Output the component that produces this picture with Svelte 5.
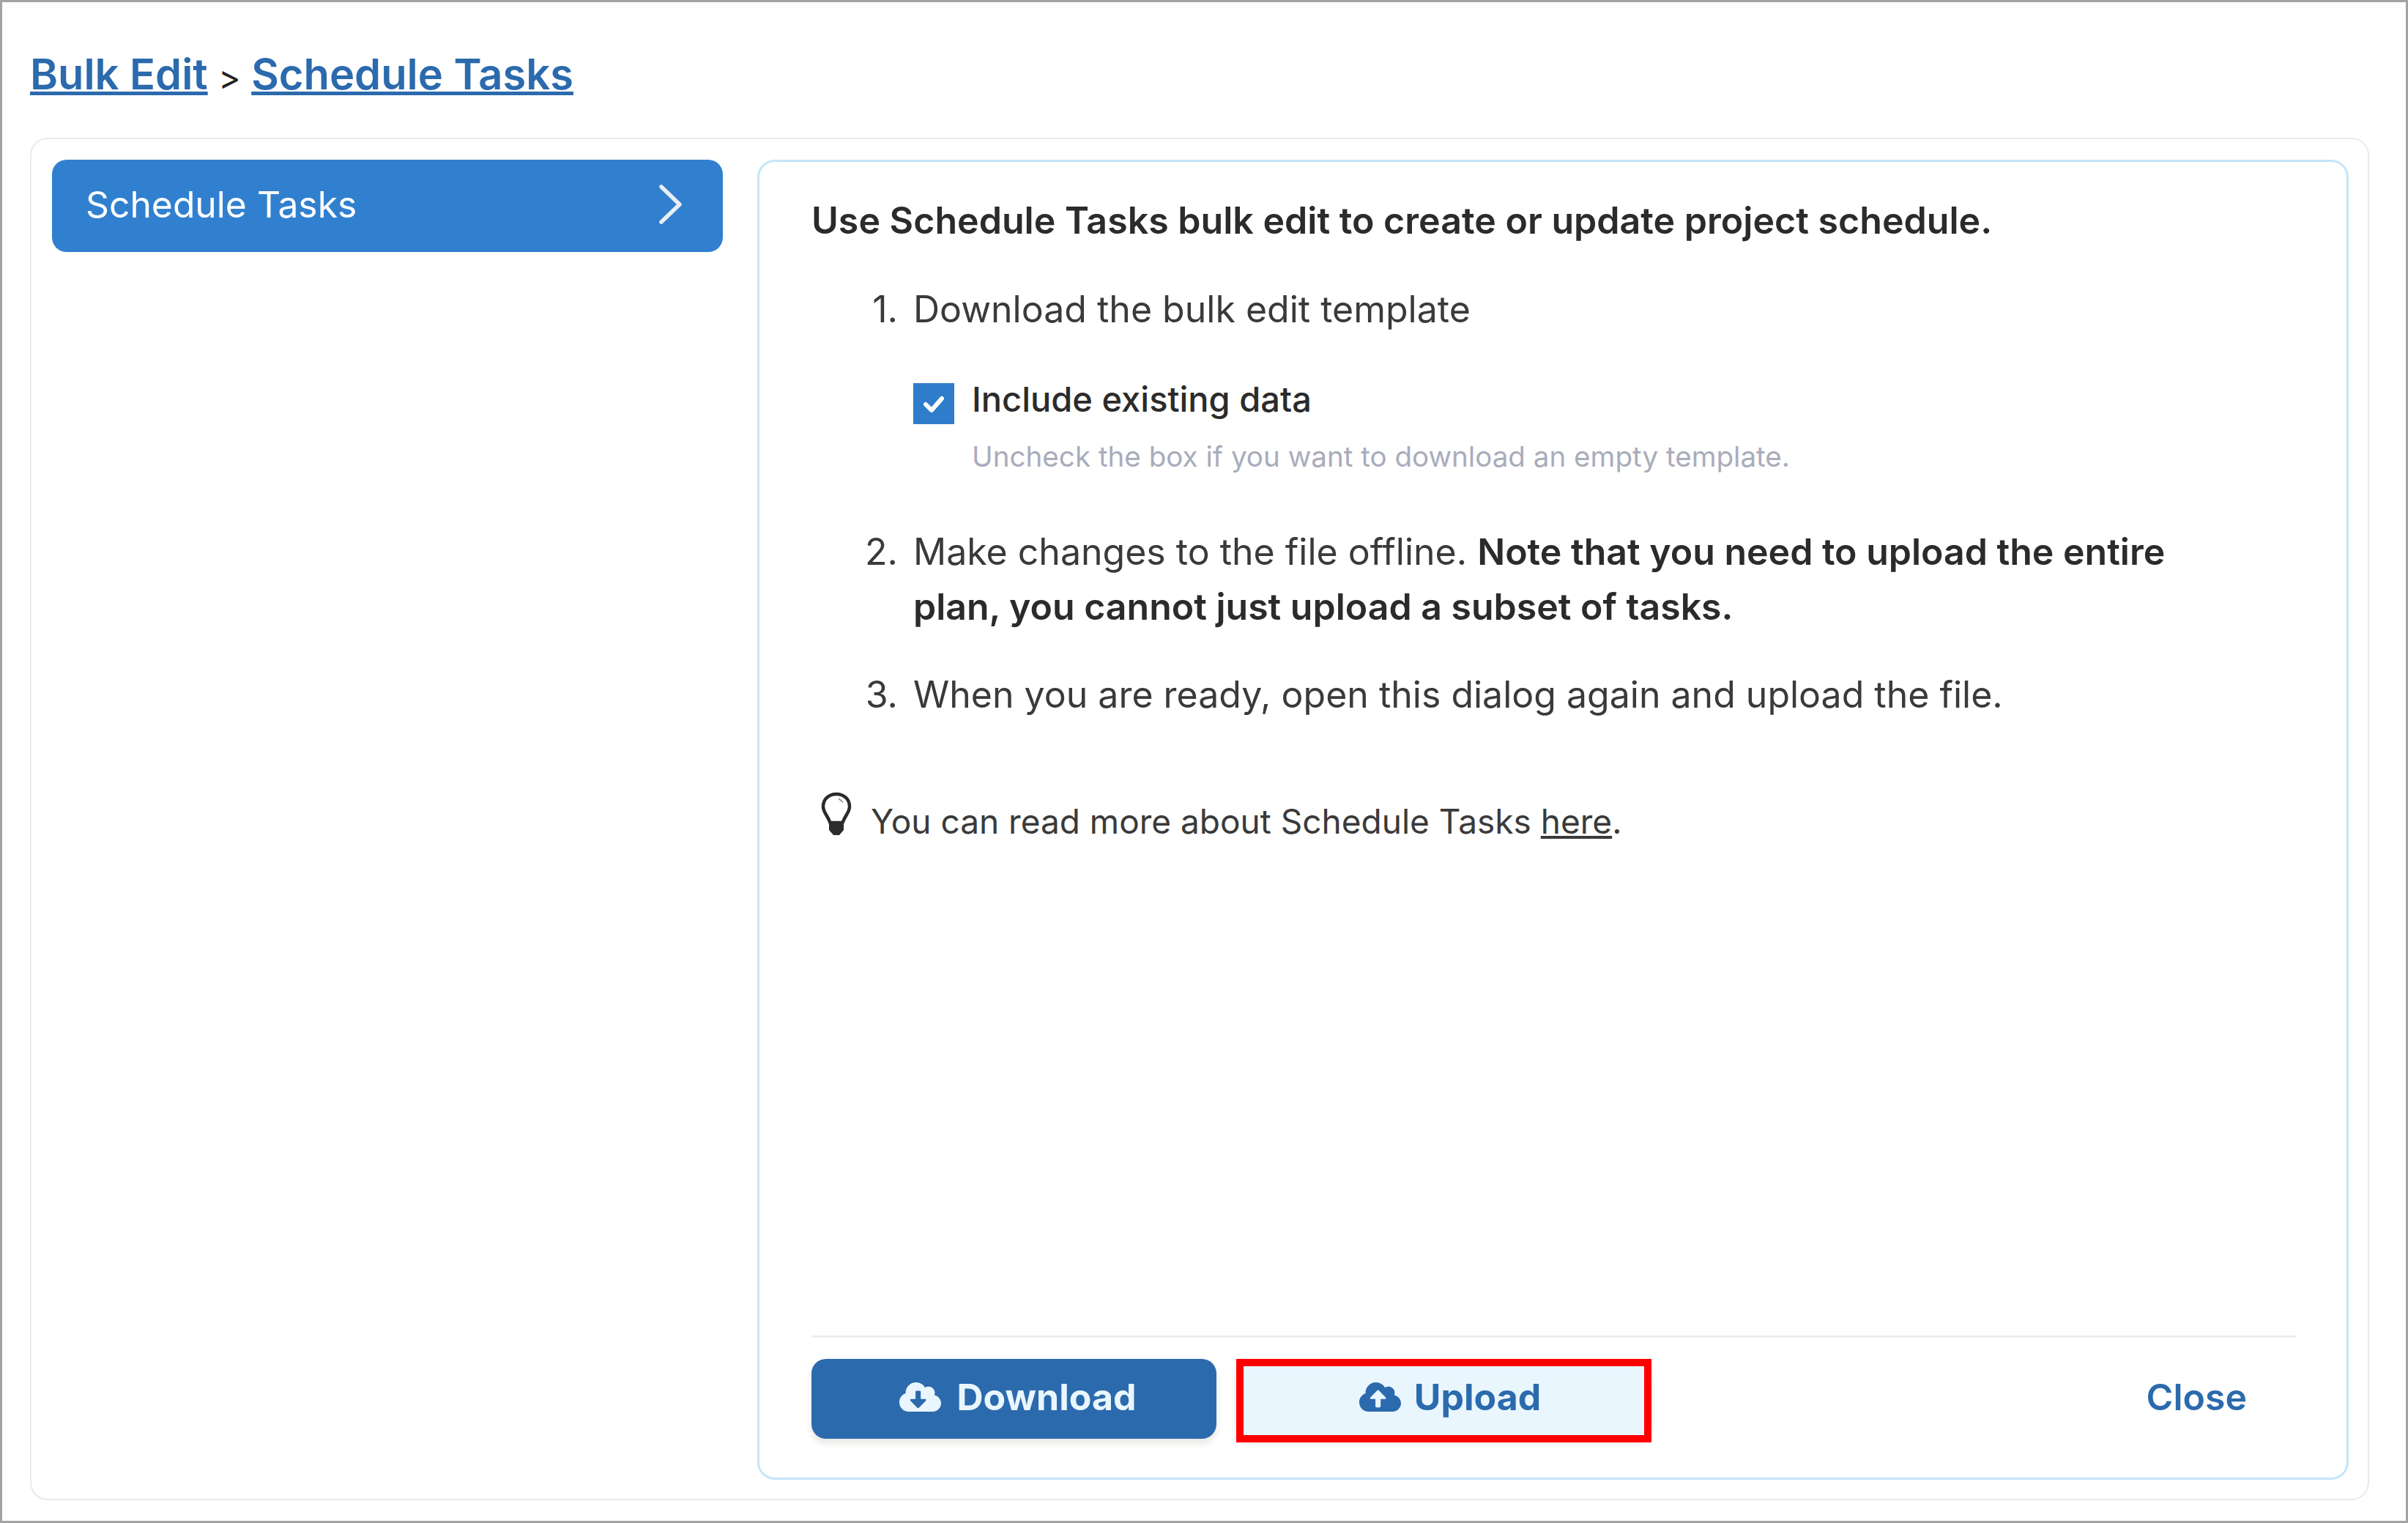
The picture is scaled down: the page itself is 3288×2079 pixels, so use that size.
<script>
  const cloudDown = "M537.6 226.6c4.1-10.7 6.4-22.4 6.4-34.6 0-53-43-96-96-96-19.7 0-38.1 6-53.3 16.2C367 64.2 315.3 32 256 32c-88.4 0-160 71.6-160 160 0 2.7.1 5.4.2 8.1C40.2 219.8 0 273.2 0 336c0 79.5 64.5 144 144 144h368c70.7 0 128-57.3 128-128 0-61.9-44-113.6-102.4-125.4zm-132.9 88.7L299.3 420.7c-6.2 6.2-16.4 6.2-22.6 0L171.3 315.3c-10.1-10.1-2.9-27.3 11.3-27.3H248V176c0-8.8 7.2-16 16-16h48c8.8 0 16 7.2 16 16v112h65.4c14.2 0 21.4 17.2 11.3 27.3z";
  const cloudUp = "M537.6 226.6c4.1-10.7 6.4-22.4 6.4-34.6 0-53-43-96-96-96-19.7 0-38.1 6-53.3 16.2C367 64.2 315.3 32 256 32c-88.4 0-160 71.6-160 160 0 2.7.1 5.4.2 8.1C40.2 219.8 0 273.2 0 336c0 79.5 64.5 144 144 144h368c70.7 0 128-57.3 128-128 0-61.9-44-113.6-102.4-125.4zM393.4 288H328v112c0 8.8-7.2 16-16 16h-48c-8.8 0-16-7.2-16-16V288h-65.4c-14.3 0-21.4-17.2-11.3-27.3l105.4-105.4c6.2-6.2 16.4-6.2 22.6 0l105.4 105.4c10.1 10.1 2.9 27.3-11.3 27.3z";
</script>

<div class="frame">
  <div class="crumbs">
    <a href="#bulk">Bulk Edit</a>
    <span class="sep">&gt;</span>
    <a href="#tasks">Schedule Tasks</a>
  </div>

  <div class="panel">
    <div class="side">
      <div class="side-item">
        <span>Schedule Tasks</span>
        <svg class="chev" viewBox="0 0 34 54" width="34" height="54">
          <path d="M4 3 L29 27 L4 51" fill="none" stroke="#e9eef5" stroke-width="5.5" stroke-linecap="round" stroke-linejoin="round" />
        </svg>
      </div>
    </div>

    <div class="main">
      <div class="body">
        <h2>Use Schedule Tasks bulk edit to create or update project schedule.</h2>

        <div class="step">
          <span class="num">1.</span>
          <div class="step-text">Download the bulk edit template</div>
        </div>

        <div class="check-row">
          <span class="box">
            <svg viewBox="0 0 56 56" width="56" height="56">
              <path d="M17 29 L25 37 L39 21" fill="none" stroke="#fff" stroke-width="6" stroke-linecap="round" stroke-linejoin="round" />
            </svg>
          </span>
          <div>
            <div class="check-label">Include existing data</div>
            <div class="hint">Uncheck the box if you want to download an empty template.</div>
          </div>
        </div>

        <div class="step two">
          <span class="num">2.</span>
          <div class="step-text">Make changes to the file offline. <b>Note that you need to upload the entire plan, you cannot just upload a subset of tasks.</b></div>
        </div>

        <div class="step three">
          <span class="num">3.</span>
          <div class="step-text">When you are ready, open this dialog again and upload the file.</div>
        </div>

        <div class="tip">
          <svg class="bulb" viewBox="0 0 42 60" width="42" height="60">
            <path d="M21 3 C10 3 3 10.500 3 20 C3 28 9 32 12.500 42 L29.500 42 C33 32 39 28 39 20 C39 10.500 32 3 21 3 Z" fill="none" stroke="#2b2b2b" stroke-width="4.500" />
            <path d="M24 9 L30 14" stroke="#9a9a9a" stroke-width="2" />
            <path d="M11 41 H31 V52 L25 59 H17 L11 52 Z" fill="#2b2b2b" />
          </svg>
          <span>You can read more about Schedule Tasks <a href="#here">here</a>.</span>
        </div>
      </div>

      <div class="footer">
        <button class="btn primary">
          <svg viewBox="0 0 640 512" width="57" height="46"><path d={cloudDown} fill="#eaf6fe" /></svg>
          Download
        </button>
        <div class="upload-wrap">
          <button class="btn secondary">
            <svg viewBox="0 0 640 512" width="57" height="46"><path d={cloudUp} fill="#2a6aad" /></svg>
            Upload
          </button>
          <div class="highlight"></div>
        </div>
        <button class="close">Close</button>
      </div>
    </div>
  </div>
</div>

<style>
  :global(body) { margin: 0; background: #fff; }
  .frame {
    box-sizing: border-box;
    width: 3288px;
    height: 2079px;
    border: 3px solid #a3a3a3;
    padding: 0 50px 28px 38px;
    display: flex;
    flex-direction: column;
    font-family: Inter, "Liberation Sans", sans-serif;
    color: #333;
    background: #fff;
  }
  .crumbs {
    height: 185px;
    box-sizing: border-box;
    padding-top: 62px;
    font-size: 57.800px;
    line-height: 72px;
    font-weight: 600;
    white-space: nowrap;
  }
  .crumbs a { color: #2a6aad; }
  .sep { color: #222; font-size: 46px; font-weight: 400; }
  .panel {
    flex: 1;
    display: flex;
    min-height: 0;
    box-sizing: border-box;
    border: 2px solid #e8eaee;
    border-radius: 24px;
    padding: 28px 26px 26px 28px;
    gap: 47px;
  }
  .side { width: 916px; flex: none; }
  .side-item {
    height: 126px;
    box-sizing: border-box;
    background: #3180cf;
    border-radius: 20px;
    color: #fff;
    display: flex;
    align-items: center;
    justify-content: space-between;
    padding: 0 54px 5px 46px;
    font-size: 49.800px;
    font-weight: 400;
  }
  .chev { display: block; }
  .main {
    flex: 1;
    min-width: 0;
    box-sizing: border-box;
    border: 3px solid #c5e6fa;
    border-radius: 24px;
    padding: 0 68px 0 71px;
    display: flex;
    flex-direction: column;
  }
  .body { flex: 1; min-height: 0; }
  h2 {
    margin: 50px 0 0;
    font-size: 50.100px;
    line-height: 60px;
    font-weight: 600;
    color: #2b2b2b;
  }
  .step {
    display: flex;
    font-size: 50px;
    line-height: 75px;
    margin-top: 54px;
    color: #3a3a3a;
  }
  .num { width: 139px; text-align: right; flex: none; box-sizing: border-box; padding-right: 21px; }
  .step-text { flex: 1; padding-right: 120px; }
  .step b { font-weight: 600; color: #2b2b2b; }
  .step.two { margin-top: 68px; }
  .step.three { margin-top: 45px; }
  .check-row { display: flex; gap: 24px; margin: 55px 0 0 139px; align-items: flex-start; }
  .box { width: 56px; height: 56px; background: #2f7ccb; flex: none; display: block; margin-top: 8px; }
  .box svg { display: block; }
  .check-label { font-size: 47px; line-height: 60px; font-weight: 500; color: #2b2b2b; }
  .hint { font-size: 38.600px; line-height: 50px; margin-top: 23px; color: #a9adbb; }
  .tip {
    display: flex;
    align-items: flex-end;
    gap: 26px;
    margin: 95px 0 0 13px;
    font-size: 46px;
    line-height: 60px;
    color: #3a3a3a;
  }
  .tip a { color: #3a3a3a; }
  .bulb { display: block; flex: none; margin-bottom: 10px; }
  .footer {
    height: 194px;
    flex: none;
    box-sizing: border-box;
    border-top: 3px solid #efefef;
    padding-top: 29px;
    display: flex;
    align-items: flex-start;
    gap: 27px;
  }
  .btn {
    display: flex;
    align-items: center;
    justify-content: center;
    gap: 22px;
    height: 109px;
    border: none;
    border-radius: 20px;
    font-family: inherit;
    font-size: 50px;
    font-weight: 700;
    padding: 0 0 6px 10px;
    box-shadow: 0 6px 10px rgba(60, 50, 30, 0.12);
  }
  .primary { width: 553px; background: #2a6aad; color: #eaf6fe; }
  .secondary { width: 567px; background: #eaf6fe; color: #2a6aad; gap: 18px; padding-left: 17px; }
  .upload-wrap { position: relative; }
  .highlight {
    position: absolute;
    left: 0;
    top: 0;
    width: 567px;
    height: 114px;
    box-sizing: border-box;
    border: 10px solid #ff0000;
  }
  .close {
    margin-left: auto;
    margin-right: 68px;
    height: 109px;
    padding: 0 0 6px;
    border: none;
    background: none;
    font-family: inherit;
    font-size: 50px;
    font-weight: 600;
    color: #2a6aad;
  }
</style>
